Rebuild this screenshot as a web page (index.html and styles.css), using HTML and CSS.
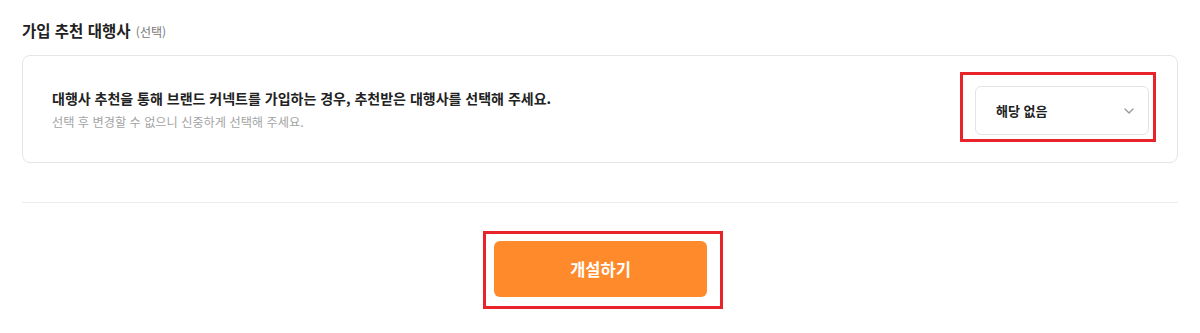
FILE: index.html
```html
<!DOCTYPE html>
<html lang="ko">
<head>
  <meta charset="UTF-8">
  <title>가입 추천 대행사</title>
  <link rel="stylesheet" href="styles.css">
</head>
<body>

  <!-- 추천 대행사 -->
  <section class="agency">
    <h3 class="agency-title">가입 추천 대행사 <span class="optional">(선택)</span></h3>

    <div class="agency-card">
      <div class="agency-text">
        <p class="agency-desc">대행사 추천을 통해 브랜드 커넥트를 가입하는 경우, 추천받은 대행사를 선택해 주세요.</p>
        <p class="agency-note">선택 후 변경할 수 없으니 신중하게 선택해 주세요.</p>
      </div>
      <div class="mark mark-select">
        <button class="select">
          <span>해당 없음</span>
          <svg class="chevron" width="10" height="6" viewBox="0 0 10 6" fill="none">
            <path d="M1 1l4 4 4-4" stroke="#9a9a9a" stroke-width="1.4" stroke-linecap="round" stroke-linejoin="round"/>
          </svg>
        </button>
      </div>
    </div>
  </section>

  <hr class="divider">

  <div class="submit-row">
    <div class="mark mark-submit">
      <button class="submit">개설하기</button>
    </div>
  </div>

</body>
</html>
```

FILE: styles.css
```css
* {
  box-sizing: border-box;
}

body {
  margin: 0;
  padding: 0 22px;
  font-family: "Noto Sans CJK KR", "Noto Sans", sans-serif;
  background: #fff;
  color: #222;
}

.agency-title {
  margin: 20px 0 0;
  height: 20px;
  font-size: 15.5px;
  line-height: 20px;
  font-weight: 700;
  color: #222;
}

.optional {
  margin-left: 1px;
  font-size: 12px;
  font-weight: 400;
  color: #777;
}

.agency-card {
  margin-top: 15px;
  height: 108px;
  display: flex;
  align-items: center;
  justify-content: space-between;
  padding: 0 21px 0 29px;
  border: 1px solid #e6e6e6;
  border-radius: 8px;
}

.agency-text p {
  margin: 0;
}

.agency-desc {
  font-size: 14px;
  line-height: 20px;
  font-weight: 700;
  color: #222;
}

.agency-note {
  margin-top: 5px !important;
  font-size: 12.2px;
  line-height: 18px;
  color: #a3a3a3;
}

.mark {
  border: 3px solid #e8232a;
}

.mark-select {
  padding: 11px 4px 4px 12px;
  margin-top: -4px;
}

.select {
  width: 174px;
  height: 49px;
  display: flex;
  align-items: center;
  justify-content: space-between;
  padding: 0 14px 0 20px;
  border: 1px solid #e4e4e4;
  border-radius: 6px;
  background: #fff;
  font-family: inherit;
  font-size: 13px;
  font-weight: 700;
  color: #222;
  cursor: pointer;
}

.divider {
  margin: 39px 0 0;
  border: none;
  border-top: 1px solid #ececec;
}

.submit-row {
  display: flex;
  justify-content: center;
  padding-left: 6px;
  margin-top: 28px;
}

.mark-submit {
  padding: 7px 13px 9px 8px;
}

.submit {
  width: 213px;
  height: 56px;
  border: none;
  border-radius: 6px;
  background: #ff8a2b;
  color: #fff;
  font-family: inherit;
  font-size: 16.5px;
  font-weight: 700;
  cursor: pointer;
}
```
